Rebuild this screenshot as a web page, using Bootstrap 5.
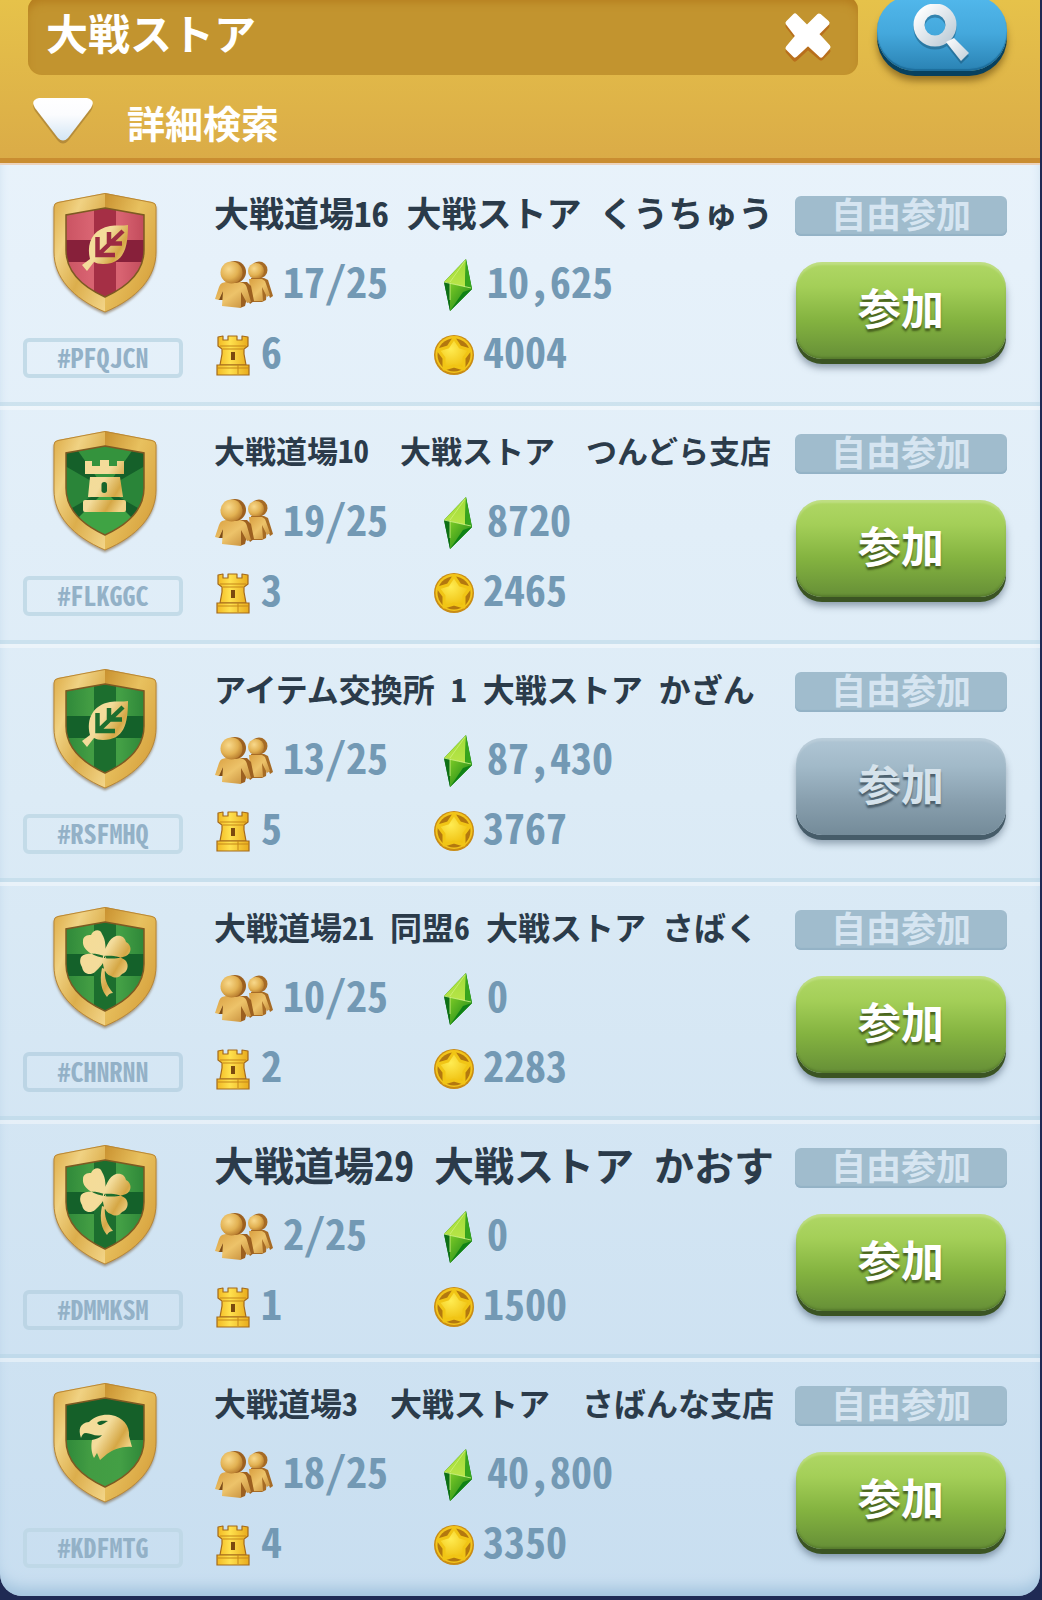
<!DOCTYPE html>
<html lang="ja">
<head>
<meta charset="utf-8">
<meta name="viewport" content="width=device-width, initial-scale=1">
<title>大戦ストア</title>
<link rel="stylesheet" href="https://cdn.jsdelivr.net/npm/bootstrap@5.3.0/dist/css/bootstrap.min.css">
<style>
  body { background: #1f2a54; font-family: "Noto Sans CJK JP", sans-serif; font-weight: 700; }
  .clan-panel { margin-right: 2px; border-radius: 0 0 22px 22px; background: linear-gradient(#ebf4fc, #dcebf6 50%, #c8def0); box-shadow: inset 0 -14px 14px -6px #a3c4de; overflow: hidden; }
  .search-head { height: 165px; padding: 0 33px 0 28px; background: linear-gradient(#e6c24a, #daab47); border-bottom: 2px solid #ecd3bd; box-shadow: inset 0 -5px #c98d31; }
  .search-line { height: 75px; gap: 19px; }
  .search-box { min-width: 0; height: 79px; margin-top: -4px; padding: 0 24px 0 18px; border-radius: 14px; background: #c2942f; box-shadow: inset 0 8px 8px -2px #b57d1e; }
  .search-box input { min-width: 0; color: #fff; font-size: 42px; font-weight: 700; line-height: 60px; height: 60px; margin-bottom: 8px; outline: 0; }
  .plain-btn { background: none; border: 0; padding: 0; color: #fff; font-weight: 700; }
  .find-btn { width: 130px; height: 75px; margin-top: -4px; border: 0; border-radius: 34px 34px 38px 38px; background: linear-gradient(#52b8ec, #44a8dc 50%, #2a82b3); box-shadow: inset 0 -2px 1px #1d6d9b, 0 5px #07415f, 0 10px 7px rgba(90,60,10,.55); }
  .more-btn { height: 88px; gap: 34px; font-size: 38px; padding: 4px 0 0 5px; }
  .clan-list { padding: 3px 0 0; margin: 0; list-style: none; }
  .clan-row { height: 238px; border-bottom: 4px solid rgba(170,205,222,.38); border-top: 4px solid rgba(255,255,255,.42); padding: 0 33px 0 23px; }
  .clan-row:first-child { border-top-color: transparent; }
  .clan-row:last-child { border-bottom-color: transparent; }
  .crest-col { width: 160px; padding-top: 21px; gap: 25px; }
  .half-width, .clan-tag, .stat-grid { font-feature-settings: "hwid"; }
  .clan-tag { width: 100%; height: 40px; border: 4px solid #c3dbe8; border-radius: 6px; color: #93b1c7; font-size: 26px; line-height: 30px; text-align: center; }
  .clan-row:nth-child(n+4) .clan-tag { border-color: #bcd5e5; }
  .clan-row:last-child .clan-tag { border-color: #bfd8e7; }
  .info-col { padding: 6px 0 0 31px; min-width: 0; }
  .clan-name { margin: 0; height: 70px; line-height: 68px; color: #2b3b4a; white-space: nowrap; font-weight: 700; }
  .size-s { font-size: 31px; } .size-m { font-size: 32px; } .size-l { font-size: 35px; } .size-xl { font-size: 40px; }
  .stat-grid { display: grid; grid-template-columns: 220px 1fr; grid-auto-rows: 70px; margin: 2px 0 0; color: #7399b4; font-size: 42px; line-height: 60px; }
  .stat-grid > div { display: flex; align-items: center; gap: 9px; }
  .stat-grid span { padding-bottom: 10px; }
  .action-col { width: 212px; padding-top: 24px; gap: 26px; }
  .open-tag { width: 100%; height: 40px; border-radius: 6px; background: #a0bccd; box-shadow: inset 0 -2px 1px #93b2c6; color: #d6e5f1; font-size: 35px; line-height: 34px; text-align: center; }
  .join-btn { width: 210px; height: 97px; border: 0; border-radius: 26px; color: #fff; font-size: 43px; font-weight: 700; line-height: 88px; padding: 0 0 9px; background: linear-gradient(#b0d765, #a4cf58 25%, #84b340 60%, #668f37); box-shadow: inset 0 3px 2px rgba(255,255,255,.2), inset 0 -2px 2px rgba(60,90,30,.35), 0 5px #3b5423, 0 9px 7px rgba(60,80,100,.5); text-shadow: 0 3px 2px #48621f; }
  .join-btn:disabled { color: #d5e2eb; background: linear-gradient(#b0c6d5, #a1b9c8 30%, #889fae 65%, #748b99); box-shadow: inset 0 3px 2px rgba(255,255,255,.15), 0 5px #465c69, 0 9px 7px rgba(60,80,100,.45); text-shadow: 0 3px 2px #4c5f6c; }
  .crest { filter: drop-shadow(0 2px 1px rgba(110,80,40,.5)); }
</style>
<script src="https://cdn.jsdelivr.net/npm/bootstrap@5.3.0/dist/js/bootstrap.bundle.min.js"></script>
</head>
<body>
<svg width="0" height="0" class="position-absolute" aria-hidden="true">
  <defs>
    <linearGradient id="rimL" x1="0" y1="0" x2="1" y2="1"><stop offset="0" stop-color="#dca943"/><stop offset=".3" stop-color="#f0d283"/><stop offset=".6" stop-color="#dcae4c"/><stop offset="1" stop-color="#f3d68a"/></linearGradient>
    <linearGradient id="rimR" x1="0" y1="0" x2="1" y2="1"><stop offset="0" stop-color="#c9912f"/><stop offset=".4" stop-color="#e8c15f"/><stop offset=".75" stop-color="#dba945"/><stop offset="1" stop-color="#c28a35"/></linearGradient>
    <linearGradient id="emb" gradientUnits="userSpaceOnUse" x1="28" y1="30" x2="78" y2="60"><stop offset="0" stop-color="#f5dc97"/><stop offset=".5" stop-color="#f3dc9b"/><stop offset=".8" stop-color="#d5a745"/><stop offset="1" stop-color="#efd286"/></linearGradient>
    <linearGradient id="grn" x1="0" x2="1" y1="0" y2="0"><stop offset="0" stop-color="#257f35"/><stop offset=".35" stop-color="#429c43"/><stop offset=".65" stop-color="#439f45"/><stop offset="1" stop-color="#237a32"/></linearGradient>
    <linearGradient id="red" x1="0" x2="1" y1="0" y2="0"><stop offset="0" stop-color="#c34b5b"/><stop offset=".35" stop-color="#d86371"/><stop offset=".65" stop-color="#d86371"/><stop offset="1" stop-color="#b63e50"/></linearGradient>
    <clipPath id="field"><path d="M52 15 91 22V57C91 78 76 93 52 104 28 93 13 78 13 57V22Z"/></clipPath>
    <radialGradient id="skin" cx=".38" cy=".35" r=".7"><stop offset="0" stop-color="#f8d98c"/><stop offset=".6" stop-color="#e2b152"/><stop offset="1" stop-color="#b67a2c"/></radialGradient>
    <linearGradient id="coat" x1="0" x2="1" y1="0" y2="1"><stop offset="0" stop-color="#d99f40"/><stop offset=".5" stop-color="#edc36a"/><stop offset="1" stop-color="#c08533"/></linearGradient>
    <linearGradient id="brick" x1="0" x2="1" y1="0" y2="0"><stop offset="0" stop-color="#f2b923"/><stop offset=".4" stop-color="#ffe14e"/><stop offset="1" stop-color="#e8ab1c"/></linearGradient>
    <radialGradient id="star" cx=".4" cy=".35" r=".7"><stop offset="0" stop-color="#ffec52"/><stop offset="1" stop-color="#eebd0a"/></radialGradient>
    <linearGradient id="white" x1="0" x2="0" y1="0" y2="1"><stop offset="0" stop-color="#fff"/><stop offset=".4" stop-color="#fbfcfe"/><stop offset="1" stop-color="#d3e6f5"/></linearGradient>
    <linearGradient id="glass" x1="0" x2="1" y1="0" y2="1"><stop offset="0" stop-color="#fff"/><stop offset="1" stop-color="#bfcdd8"/></linearGradient>
    <linearGradient id="gemLow" x1="0" x2="1" y1="0" y2="1"><stop offset="0" stop-color="#7ccb26"/><stop offset="1" stop-color="#0f7f16"/></linearGradient>
    <linearGradient id="gemTop" x1="0" x2="0" y1="0" y2="1"><stop offset="0" stop-color="#9fdc38"/><stop offset="1" stop-color="#b9e548"/></linearGradient>
  </defs>
  <symbol id="rim" viewBox="0 0 104 120">
    <path fill="url(#rimL)" d="M52 0 5 9Q1 10 1 14V59C1 84 19 105 52 119V104C28 93 13 78 13 57V22L52 15Z"/>
    <path fill="url(#rimR)" d="M52 0 99 9Q103 10 103 14V59C103 84 85 105 52 119V104C76 93 91 78 91 57V22L52 15Z"/>
    <path fill="none" stroke="#b98736" d="M52 .5 5 9.500Q1 10 1 14V59C1 84 19 105 52 119 85 105 103 84 103 59V14Q103 10 99 9.500Z"/>
    <path fill="none" stroke="#7d5a22" stroke-width="1.500" d="M52 15 91 22V57C91 78 76 93 52 104 28 93 13 78 13 57V22Z"/>
  </symbol>
  <symbol id="leaf" viewBox="0 0 104 120">
    <path fill="url(#emb)" d="M75 32C75 55 71 71 50 71 46 71 43 70 41 69L34 78 29 72 37 66C33 50 40 36 57 33 63 32 70 33 75 32Z"/>
    <path fill="none" stroke="currentColor" stroke-width="4.500" d="M70 38 45 62M44.500 44V62H62M56 39V50.500H69"/>
  </symbol>
  <symbol id="checks" viewBox="0 0 104 120">
    <g clip-path="url(#field)"><path fill="url(#grn)" d="M0 0H104V120H0Z"/><path fill="#1c6e2e" d="M41 0H63V120H41Z"/><path fill="#14612a" d="M0 47H104V69H0Z"/><path fill="#1d6f2f" d="M41 47H63V69H41Z"/></g>
    <use href="#rim"/>
  </symbol>
  <symbol id="crest-red" viewBox="0 0 104 120">
    <g clip-path="url(#field)"><path fill="url(#red)" d="M0 0H104V120H0Z"/><path fill="#a52f45" d="M41 0H63V120H41Z"/><path fill="#87203a" d="M0 47H104V69H0Z"/><path fill="#9c2b42" d="M41 47H63V69H41Z"/></g>
    <use href="#rim"/><use href="#leaf" color="#9c2b42"/>
  </symbol>
  <symbol id="crest-leaf" viewBox="0 0 104 120"><use href="#checks"/><use href="#leaf" color="#1d6f2f"/></symbol>
  <symbol id="crest-clover" viewBox="0 0 104 120">
    <use href="#checks"/>
    <path fill="url(#emb)" d="M51 51C40 49 29 43 30 34 30 29 34 28 38 28 40 23 47 21 49 27 53 33 53 42 52 51ZM51 51C51 42 56 31 63 29 69 28 72 31 73 35 79 38 79 46 73 49 65 52 57 52 51 51ZM53 50C45 46 33 45 28 50 26 55 28 58 29 60 30 67 37 69 42 65 47 60 51 56 53 50ZM50 49C49 57 51 67 58 69 63 72 67 70 69 67 75 65 76 58 73 54 69 49 58 48 50 49ZM49 61C46 75 49 84 54 90Q56 86 60 86C54 79 51 71 52 62Z"/>
  </symbol>
  <symbol id="crest-tower" viewBox="0 0 104 120">
    <g clip-path="url(#field)"><path fill="#15602a" d="M0 0H104V120H0Z"/><path fill="#34933d" d="M52 58 18 10H86Z"/><path fill="#2a8539" d="M52 58 0 28V88ZM52 58 104 28V88Z"/><path fill="#3fa344" d="M52 60 16 96 52 120 88 96Z"/></g>
    <use href="#rim"/>
    <path fill="url(#emb)" d="M32 30H39V35H47V29H56V35H64V30H71V43H32ZM37 46H67L70 66H35ZM32 69H71Q73 69 73 71V79Q73 81 71 81H32Q30 81 30 79V71Q30 69 32 69Z"/>
    <rect x="48.500" y="51" width="5.500" height="11" rx="2.700" fill="#17652b"/>
  </symbol>
  <symbol id="crest-eagle" viewBox="0 0 104 120">
    <g clip-path="url(#field)"><path fill="url(#grn)" d="M0 57H104V120H0Z"/><path fill="#156029" d="M0 0H104V57H0Z"/></g>
    <use href="#rim"/>
    <path fill="url(#emb)" d="M28 55C25 46 27 40 36 39 42 33 50 31 58 32 70 34 77 43 76 53L79 64C70 63 61 66 54 71L47 77 44 70 41 75C38 69 38 62 39 57 43 56 47 55 49 52 42 54 38 50 33 50 30 50 29 52 28 55Z"/>
    <path fill="#14602a" d="M44 40C47 37 51 38 55 38 51 40 50 42 46 42Z"/>
  </symbol>
  <symbol id="people" viewBox="0 0 60 50">
    <circle cx="45" cy="10" r="8.500" fill="#a66b25"/><circle cx="42" cy="11" r="8" fill="url(#skin)"/>
    <path fill="#a66b25" d="M37 18H50L54 20 59 36 56 38 53 30 52 40 48 42H38Z"/>
    <path fill="url(#coat)" d="M35 19H48L51 21 56 35 53 37 48 27 49 41H37Z"/>
    <path fill="#9c6020" d="M18 22H33L37 26 40 41 36 44 33 38 31 46 26 48Z"/>
    <path fill="#7c4b18" d="M4 40 9 30V40Z"/>
    <path fill="url(#coat)" d="M8 23Q20 19 29 23 32 24 33 28L37 42 33 43 27 32 27 48 8 46 9 31 5 40 1 39 5 27Q6 24 8 23Z"/>
    <circle cx="21" cy="12" r="11" fill="#9c6020"/><circle cx="17.500" cy="12.500" r="11" fill="url(#skin)"/>
  </symbol>
  <symbol id="tower" viewBox="0 0 38 42">
    <path fill="url(#brick)" stroke="#a46a1c" stroke-width="1.200" stroke-linejoin="round" d="M4 3 9 2V6H14V2H23V6H28V2L34 3V12L30 15V20L32 31H6L8 20V15L4 12Z"/>
    <path fill="url(#brick)" stroke="#a46a1c" stroke-width="1.200" d="M3 31H35V41H3Z"/>
    <path fill="none" stroke="#c58718" d="M6 12H32M9 15H29M4 34H34M24 31V40"/>
    <path fill="#7b4a0f" d="M17 18H21V26H17Z"/>
  </symbol>
  <symbol id="gem" viewBox="0 0 30 54">
    <path fill="#0f7a18" d="M23 1 29 31 7 53 1 24Z"/>
    <path fill="url(#gemTop)" d="M23 1 1 24 22 29Z"/>
    <path fill="#37a51d" d="M23 1 29 31 22 29Z"/>
    <path fill="url(#gemLow)" d="M7 25 22 29 29 31 7 53Z"/>
    <path fill="#0d7016" d="M1 24 7 25 7 53Z"/>
    <path fill="#0f8216" d="M29 31 7 53 20 34Z"/>
    <path fill="none" stroke="#d8f68a" stroke-width=".8" d="M1 24 28 30M7 25V42"/>
    <path fill="none" stroke="#d8f68a" stroke-width=".6" d="M7 24 22 3"/>
  </symbol>
  <symbol id="coin" viewBox="0 0 40 42">
    <circle cx="20" cy="21" r="20" fill="#c98c14"/><circle cx="20" cy="20.500" r="18.500" fill="#f3c51c"/><circle cx="20" cy="21" r="16.500" fill="#b3780f"/>
    <path fill="url(#star)" stroke="#f1c515" stroke-width="3" stroke-linejoin="round" d="M20 4 26 13 36 16 30 24 30 35 20 32 10 35 10 24 4 16 14 13Z"/>
  </symbol>
</svg>

<main class="clan-panel">
  <header class="search-head">
    <form class="search-line d-flex" onsubmit="return false">
      <div class="search-box d-flex align-items-center flex-grow-1">
        <input class="flex-grow-1 border-0 bg-transparent p-0" type="text" value="大戦ストア" aria-label="検索">
        <button class="plain-btn d-flex flex-shrink-0 pt-1" type="reset" aria-label="消去">
          <svg width="50" height="52" viewBox="0 0 50 52"><path fill="#b86f1c" stroke="#b86f1c" stroke-width="5" stroke-linejoin="round" d="M4 14 11 8 23 20 35 7 43 14 32 26 44 39 37 46 24 35 11 47 4 39 14 27Z"/><path fill="#fff" stroke="#fff" stroke-width="5" stroke-linejoin="round" d="M4 11 11 4 23 16 35 4 43 11 32 22 44 35 37 43 24 31 11 43 4 36 14 24Z"/></svg>
        </button>
      </div>
      <button class="find-btn d-flex flex-shrink-0 justify-content-center p-0" type="submit" aria-label="検索">
        <svg width="58" height="62" viewBox="0 0 58 62" class="mt-2"><g opacity=".45" transform="translate(0 3)"><circle cx="22" cy="21" r="16" fill="none" stroke="#174f70" stroke-width="11"/><path fill="#174f70" d="M33 38 41 34 56 49 48 57Z"/></g><circle cx="22" cy="21" r="16" fill="none" stroke="url(#glass)" stroke-width="11"/><path fill="url(#glass)" d="M33 38 41 34 56 49 48 57Z"/></svg>
      </button>
    </form>
    <button class="plain-btn more-btn d-flex align-items-center" type="button">
      <svg width="60" height="46" viewBox="0 0 60 46"><path fill="#8f6a2c" opacity=".5" d="M6 3H54Q63 5 58 13L35 43Q30 48 25 43L2 13Q-3 5 6 3Z"/><path fill="url(#white)" d="M6 0H54Q63 2 58 10L35 40Q30 45 25 40L2 10Q-3 2 6 0Z"/></svg>
      <span>詳細検索</span>
    </button>
  </header>

  <ul class="clan-list">
    <li class="clan-row d-flex">
      <div class="crest-col d-flex flex-column align-items-center"><svg class="crest ms-1" width="104" height="120"><use href="#crest-red"/></svg><div class="clan-tag">#PFQJCN</div></div>
      <div class="info-col flex-grow-1">
        <h2 class="clan-name half-width size-l">大戦道場16 大戦ストア くうちゅう</h2>
        <div class="stat-grid">
          <div><svg width="60" height="50"><use href="#people"/></svg><span>17/25</span></div>
          <div><svg class="ms-2" width="36" height="54" viewBox="-1 0 36 54"><use href="#gem" width="30" height="54"/></svg><span>10,625</span></div>
          <div><svg width="38" height="42"><use href="#tower"/></svg><span>6</span></div>
          <div><svg width="40" height="42"><use href="#coin"/></svg><span>4004</span></div>
        </div>
      </div>
      <div class="action-col d-flex flex-column align-items-center"><div class="open-tag">自由参加</div><button class="join-btn" type="button">参加</button></div>
    </li>
    <li class="clan-row d-flex">
      <div class="crest-col d-flex flex-column align-items-center"><svg class="crest ms-1" width="104" height="120"><use href="#crest-tower"/></svg><div class="clan-tag">#FLKGGC</div></div>
      <div class="info-col flex-grow-1">
        <h2 class="clan-name size-s">大戦道場<span class="half-width">10</span>　大戦ストア　つんどら支店</h2>
        <div class="stat-grid">
          <div><svg width="60" height="50"><use href="#people"/></svg><span>19/25</span></div>
          <div><svg class="ms-2" width="36" height="54" viewBox="-1 0 36 54"><use href="#gem" width="30" height="54"/></svg><span>8720</span></div>
          <div><svg width="38" height="42"><use href="#tower"/></svg><span>3</span></div>
          <div><svg width="40" height="42"><use href="#coin"/></svg><span>2465</span></div>
        </div>
      </div>
      <div class="action-col d-flex flex-column align-items-center"><div class="open-tag">自由参加</div><button class="join-btn" type="button">参加</button></div>
    </li>
    <li class="clan-row d-flex">
      <div class="crest-col d-flex flex-column align-items-center"><svg class="crest ms-1" width="104" height="120"><use href="#crest-leaf"/></svg><div class="clan-tag">#RSFMHQ</div></div>
      <div class="info-col flex-grow-1">
        <h2 class="clan-name half-width size-m">アイテム交換所 1 大戦ストア かざん</h2>
        <div class="stat-grid">
          <div><svg width="60" height="50"><use href="#people"/></svg><span>13/25</span></div>
          <div><svg class="ms-2" width="36" height="54" viewBox="-1 0 36 54"><use href="#gem" width="30" height="54"/></svg><span>87,430</span></div>
          <div><svg width="38" height="42"><use href="#tower"/></svg><span>5</span></div>
          <div><svg width="40" height="42"><use href="#coin"/></svg><span>3767</span></div>
        </div>
      </div>
      <div class="action-col d-flex flex-column align-items-center"><div class="open-tag">自由参加</div><button class="join-btn" type="button" disabled>参加</button></div>
    </li>
    <li class="clan-row d-flex">
      <div class="crest-col d-flex flex-column align-items-center"><svg class="crest ms-1" width="104" height="120"><use href="#crest-clover"/></svg><div class="clan-tag">#CHNRNN</div></div>
      <div class="info-col flex-grow-1">
        <h2 class="clan-name half-width size-m">大戦道場21 同盟6 大戦ストア さばく</h2>
        <div class="stat-grid">
          <div><svg width="60" height="50"><use href="#people"/></svg><span>10/25</span></div>
          <div><svg class="ms-2" width="36" height="54" viewBox="-1 0 36 54"><use href="#gem" width="30" height="54"/></svg><span>0</span></div>
          <div><svg width="38" height="42"><use href="#tower"/></svg><span>2</span></div>
          <div><svg width="40" height="42"><use href="#coin"/></svg><span>2283</span></div>
        </div>
      </div>
      <div class="action-col d-flex flex-column align-items-center"><div class="open-tag">自由参加</div><button class="join-btn" type="button">参加</button></div>
    </li>
    <li class="clan-row d-flex">
      <div class="crest-col d-flex flex-column align-items-center"><svg class="crest ms-1" width="104" height="120"><use href="#crest-clover"/></svg><div class="clan-tag">#DMMKSM</div></div>
      <div class="info-col flex-grow-1">
        <h2 class="clan-name half-width size-xl">大戦道場29 大戦ストア かおす</h2>
        <div class="stat-grid">
          <div><svg width="60" height="50"><use href="#people"/></svg><span>2/25</span></div>
          <div><svg class="ms-2" width="36" height="54" viewBox="-1 0 36 54"><use href="#gem" width="30" height="54"/></svg><span>0</span></div>
          <div><svg width="38" height="42"><use href="#tower"/></svg><span>1</span></div>
          <div><svg width="40" height="42"><use href="#coin"/></svg><span>1500</span></div>
        </div>
      </div>
      <div class="action-col d-flex flex-column align-items-center"><div class="open-tag">自由参加</div><button class="join-btn" type="button">参加</button></div>
    </li>
    <li class="clan-row d-flex">
      <div class="crest-col d-flex flex-column align-items-center"><svg class="crest ms-1" width="104" height="120"><use href="#crest-eagle"/></svg><div class="clan-tag">#KDFMTG</div></div>
      <div class="info-col flex-grow-1">
        <h2 class="clan-name size-m">大戦道場<span class="half-width">3</span>　大戦ストア　さばんな支店</h2>
        <div class="stat-grid">
          <div><svg width="60" height="50"><use href="#people"/></svg><span>18/25</span></div>
          <div><svg class="ms-2" width="36" height="54" viewBox="-1 0 36 54"><use href="#gem" width="30" height="54"/></svg><span>40,800</span></div>
          <div><svg width="38" height="42"><use href="#tower"/></svg><span>4</span></div>
          <div><svg width="40" height="42"><use href="#coin"/></svg><span>3350</span></div>
        </div>
      </div>
      <div class="action-col d-flex flex-column align-items-center"><div class="open-tag">自由参加</div><button class="join-btn" type="button">参加</button></div>
    </li>
  </ul>
</main>
</body>
</html>
